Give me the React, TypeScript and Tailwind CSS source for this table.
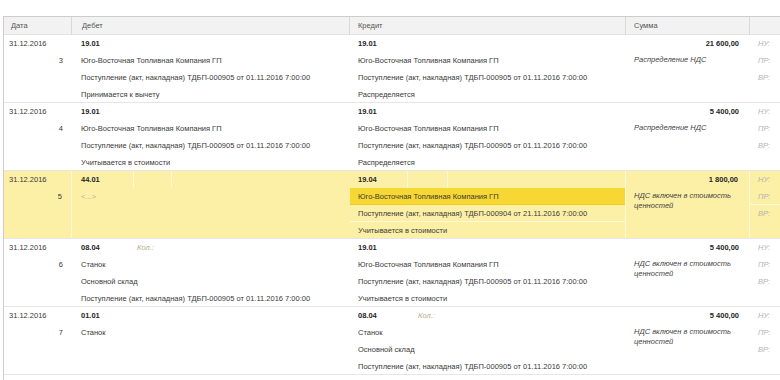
import React from "react";

type LineProps = {
  children?: React.ReactNode;
  bold?: boolean;
  pl?: "d" | "c";
  className?: string;
};

function L({ children, bold, pl = "d", className = "" }: LineProps) {
  return (
    <div
      className={`h-[17px] shrink-0 leading-[17px] whitespace-nowrap overflow-hidden ${
        pl === "d" ? "pl-[9px]" : "pl-[8px]"
      } ${bold ? "font-bold text-[#262626]" : ""} ${className}`}
    >
      {children}
    </div>
  );
}

function Kol({ w }: { w: "d" | "c" }) {
  return (
    <div className="flex">
      <span className={`font-bold text-[#262626] ${w === "d" ? "w-[56px]" : "w-[60px]"}`}>
        {w === "d" ? "08.04" : "08.04"}
      </span>
      <span className="italic text-[#b8ad8c]">Кол.:</span>
    </div>
  );
}

const POST905 = "Поступление (акт, накладная) ТДБП-000905 от 01.11.2016 7:00:00";
const POST904 = "Поступление (акт, накладная) ТДБП-000904 от 21.11.2016 7:00:00";
const UGO = "Юго-Восточная Топливная Компания ГП";

type RowProps = {
  num: string;
  debit: React.ReactNode;
  credit: React.ReactNode;
  amount: string;
  note: string;
  yellow?: boolean;
};

function Row({ num, debit, credit, amount, note, yellow }: RowProps) {
  const sep = yellow ? "border-r border-[#fff8d8]" : "";
  return (
    <div
      className={`grid grid-cols-[68px_278px_276px_124px_30px] h-[68px] border-b border-[#e6e6e6] overflow-hidden ${
        yellow ? "bg-[#fcefa6]" : "bg-white"
      }`}
    >
      <div className={`flex flex-col ${sep}`}>
        <div className="h-[17px] leading-[17px] pl-[5px]">31.12.2016</div>
        <div className="h-[17px] leading-[17px] text-right pr-[9px]">{num}</div>
      </div>
      <div className="flex flex-col">{debit}</div>
      <div className={`flex flex-col ${sep}`}>{credit}</div>
      <div className={`flex flex-col ${sep}`}>
        <div className="h-[17px] leading-[17px] text-right pr-[11px] font-bold text-[#262626]">
          {amount}
        </div>
        <div className="pl-[8px] pr-[14px] pt-[3px] leading-[10px] italic text-[#444]">
          {note}
        </div>
      </div>
      <div className="flex flex-col italic text-[#b3b3b3]">
        <div className="h-[17px] leading-[17px] pl-[8px]">НУ:</div>
        <div
          className={`h-[17px] leading-[17px] pl-[8px] ${
            yellow ? "border-b border-[#fff8d8]" : ""
          }`}
        >
          ПР:
        </div>
        <div className="h-[17px] leading-[17px] pl-[8px]">ВР:</div>
      </div>
    </div>
  );
}

export default function App() {
  return (
    <div className="w-[780px] h-[380px] bg-white pt-4 pl-[3px] overflow-hidden font-['Liberation_Sans',Arial,sans-serif] text-[7.5px] text-[#3a3a3a]">
      <div className="border-l border-t border-[#cdcdcd] h-[364px]">
        <div className="grid grid-cols-[68px_278px_276px_124px_30px] h-[18px] bg-[#f2f2f2] border-b border-[#e2e2e2] text-[#555]">
          <div className="border-r border-[#d9d9d9] pl-[7px] leading-[18px]">Дата</div>
          <div className="border-r border-[#d9d9d9] pl-[10px] leading-[18px]">Дебет</div>
          <div className="border-r border-[#d9d9d9] pl-[8px] leading-[18px]">Кредит</div>
          <div className="border-r border-[#d9d9d9] pl-[8px] leading-[18px]">Сумма</div>
          <div />
        </div>

        <Row
          num="3"
          debit={
            <>
              <L bold>19.01</L>
              <L>{UGO}</L>
              <L>{POST905}</L>
              <L>Принимается к вычету</L>
            </>
          }
          credit={
            <>
              <L bold pl="c">19.01</L>
              <L pl="c">{UGO}</L>
              <L pl="c">{POST905}</L>
              <L pl="c">Распределяется</L>
            </>
          }
          amount="21 600,00"
          note="Распределение НДС"
        />

        <Row
          num="4"
          debit={
            <>
              <L bold>19.01</L>
              <L>{UGO}</L>
              <L>{POST905}</L>
              <L>Учитывается в стоимости</L>
            </>
          }
          credit={
            <>
              <L bold pl="c">19.01</L>
              <L pl="c">{UGO}</L>
              <L pl="c">{POST905}</L>
              <L pl="c">Распределяется</L>
            </>
          }
          amount="5 400,00"
          note="Распределение НДС"
        />

        <Row
          yellow
          num="5"
          debit={
            <>
              <div className="flex h-[17px] shrink-0 leading-[17px]">
                <div className="w-[62px] pl-[9px] font-bold text-[#262626] border-r border-[#fff8d8]">
                  44.01
                </div>
                <div className="w-[38px] border-r border-[#fff8d8]" />
              </div>
              <L className="text-[#b9b29c]">{"<...>"}</L>
            </>
          }
          credit={
            <>
              <div className="flex h-[17px] shrink-0 leading-[17px]">
                <div className="w-[58px] pl-[8px] font-bold text-[#262626] border-r border-[#fff8d8]">
                  19.04
                </div>
                <div className="w-[40px] border-r border-[#fff8d8]" />
              </div>
              <L pl="c" className="bg-[#f7d733] border-b border-[#f0ce20]">
                {UGO}
              </L>
              <L pl="c" className="border-b border-[#fff8d8]">
                {POST904}
              </L>
              <L pl="c">Учитывается в стоимости</L>
            </>
          }
          amount="1 800,00"
          note="НДС включен в стоимость ценностей"
        />

        <Row
          num="6"
          debit={
            <>
              <L>
                <Kol w="d" />
              </L>
              <L>Станок</L>
              <L>Основной склад</L>
              <L>{POST905}</L>
            </>
          }
          credit={
            <>
              <L bold pl="c">19.01</L>
              <L pl="c">{UGO}</L>
              <L pl="c">{POST905}</L>
              <L pl="c">Учитывается в стоимости</L>
            </>
          }
          amount="5 400,00"
          note="НДС включен в стоимость ценностей"
        />

        <Row
          num="7"
          debit={
            <>
              <L bold>01.01</L>
              <L>Станок</L>
            </>
          }
          credit={
            <>
              <L pl="c">
                <Kol w="c" />
              </L>
              <L pl="c">Станок</L>
              <L pl="c">Основной склад</L>
              <L pl="c">{POST905}</L>
            </>
          }
          amount="5 400,00"
          note="НДС включен в стоимость ценностей"
        />
      </div>
    </div>
  );
}
